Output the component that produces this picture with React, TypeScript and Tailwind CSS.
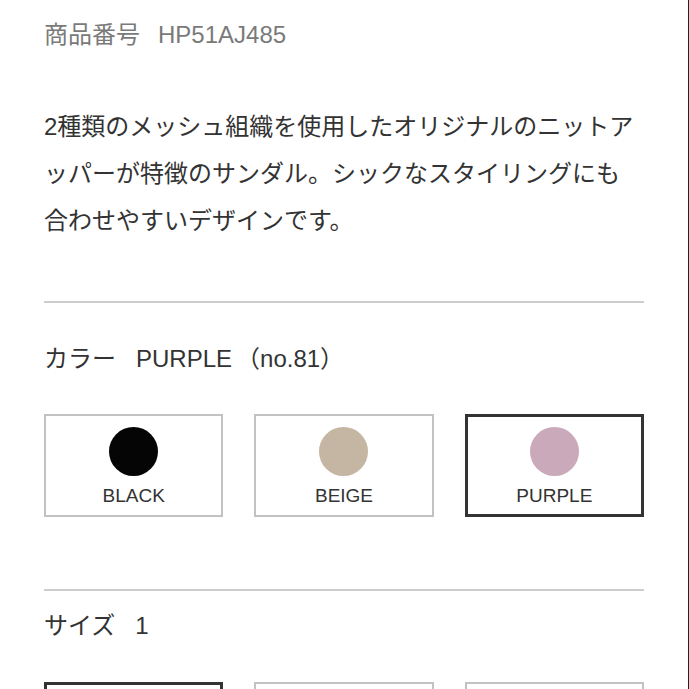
const font = { fontFamily: '"Liberation Sans", "Noto Sans CJK JP", sans-serif' };

const colors = [
  { name: "BLACK", swatch: "bg-[#050505]" },
  { name: "BEIGE", swatch: "bg-[#c4b6a2]" },
  { name: "PURPLE", swatch: "bg-[#c9a9ba]" },
];

function Card({ label, swatch, selected }: { label?: string; swatch?: string; selected?: boolean }) {
  return (
    <div
      className={`flex h-[103px] flex-col items-center bg-white ${
        selected ? "border-[3px] border-[#333] pt-[10px]" : "border-2 border-[#c2c2c2] pt-[11px]"
      }`}
    >
      {swatch && (
        <>
          <div className={`h-[49px] w-[49px] shrink-0 rounded-full ${swatch}`} />
          <div className="mt-[8px] text-[19px] leading-[24px] text-[#333]">{label}</div>
        </>
      )}
    </div>
  );
}

export default function App() {
  return (
    <div className="h-[689px] w-[689px] overflow-hidden border-r border-[#222] bg-white" style={font}>
      <div className="box-content w-[600px] pl-[44px]">
        <div className="pt-[19px] text-[24px] leading-[32px] text-[#7a7a7a]">
          商品番号<span className="ml-[18px]">HP51AJ485</span>
        </div>

        <p className="mt-[52px] text-[24px] leading-[47px] text-[#333]">
          2種類のメッシュ組織を使用したオリジナルのニットア
          <br />
          ッパーが特徴のサンダル。シックなスタイリングにも
          <br />
          合わせやすいデザインです。
        </p>

        <div className="mt-[57px] h-[2px] bg-[#cdcdcd]" />

        <div className="mt-[40px] text-[24px] leading-[32px] text-[#333]">
          カラー<span className="ml-[20px]">PURPLE</span>
          <span className="ml-[4px]">（no.81）</span>
        </div>

        <div className="mt-[39px] grid grid-cols-3 gap-[31px]">
          {colors.map((c) => (
            <Card key={c.name} label={c.name} swatch={c.swatch} selected={c.name === "PURPLE"} />
          ))}
        </div>

        <div className="mt-[72px] h-[2px] bg-[#cdcdcd]" />

        <div className="mt-[19px] text-[24px] leading-[32px] text-[#333]">
          サイズ<span className="ml-[20px]">1</span>
        </div>

        <div className="mt-[40px] grid grid-cols-3 gap-[31px]">
          <Card selected />
          <Card />
          <Card />
        </div>
      </div>
    </div>
  );
}
